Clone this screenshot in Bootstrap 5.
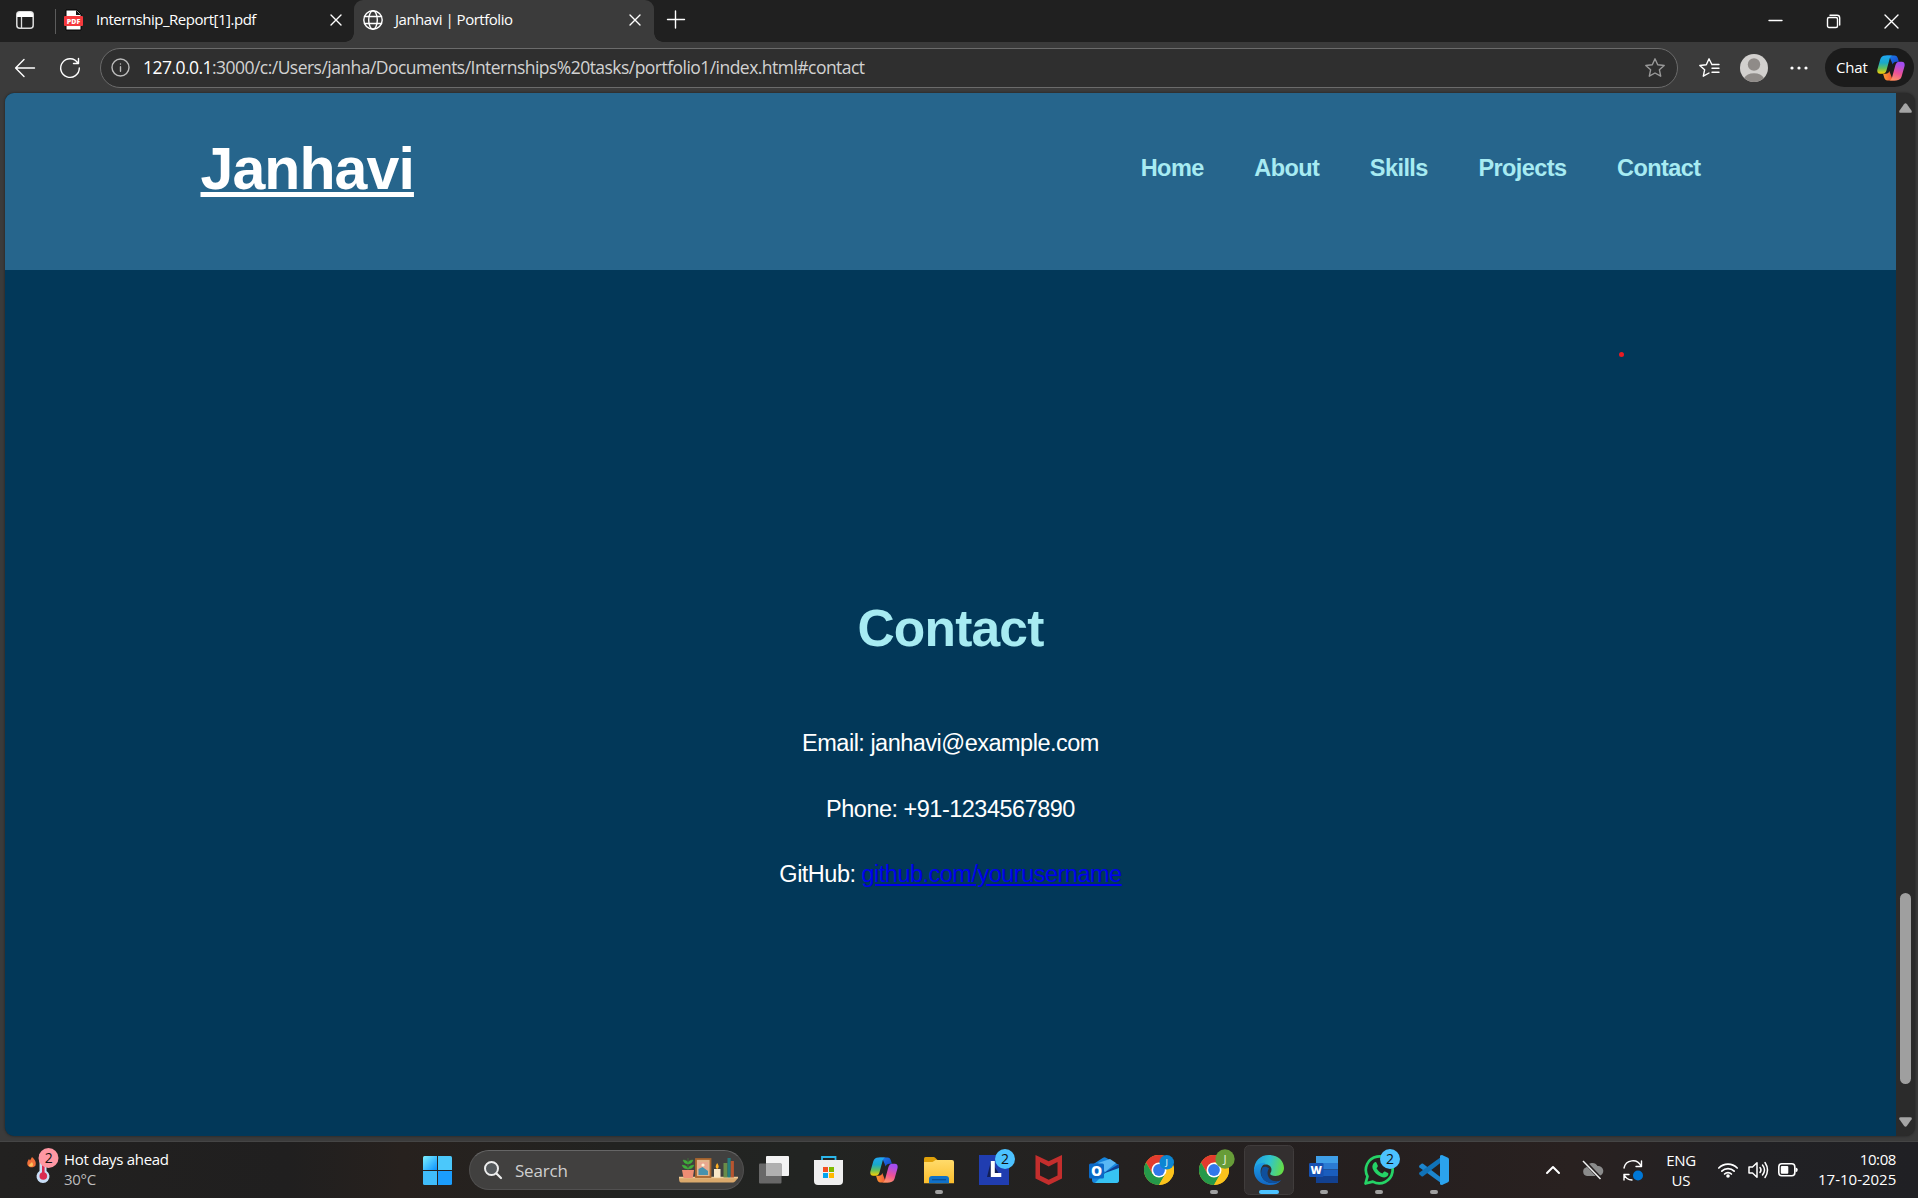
<!DOCTYPE html>
<html lang="en">
<head>
<meta charset="utf-8">
<meta name="viewport" content="width=device-width, initial-scale=1">
<title>Janhavi | Portfolio</title>
<link href="https://cdn.jsdelivr.net/npm/bootstrap@5.3.0/dist/css/bootstrap.min.css" rel="stylesheet">
<style>
  html, body { height: 1198px; overflow: hidden; }
  body { background: #3b3b3b; color: #fff; font-family: "Open Sans", "Noto Sans", sans-serif; }
  svg { display: block; flex: none; overflow: visible; }
  .ln { fill: none; stroke: #fff; stroke-width: 1.4; stroke-linecap: round; stroke-linejoin: round; }

  /* tab strip */
  .tabstrip { height: 42px; background: #202020; font-size: 15px; line-height: 32px; }
  .tabmenu { width: 55px; height: 42px; padding-left: 16px; padding-top: 11px; }
  .tab-idle { width: 298px; height: 42px; padding: 0 12px 0 8px; }
  .tab-sep { width: 1px; height: 25px; margin-top: 9px; background: #5c5c5c; }
  .tab-live { width: 300px; height: 42px; padding: 0 13px 0 9px; background: #3b3b3b; border-radius: 9px 9px 0 0; position: relative; }
  .tab-live::before, .tab-live::after { content: ""; position: absolute; bottom: 0; width: 9px; height: 9px; }
  .tab-live::before { left: -9px; background: radial-gradient(circle at 0 0, transparent 8.5px, #3b3b3b 9px); }
  .tab-live::after { right: -9px; background: radial-gradient(circle at 100% 0, transparent 8.5px, #3b3b3b 9px); }
  .tab-title { letter-spacing: -.48px; white-space: nowrap; padding-bottom: 2px; }
  .tab-row { height: 40px; }
  .winbtns { gap: 45px; padding-right: 20px; height: 42px; }

  /* address row */
  .toolbar { height: 51px; padding: 0 4px 0 15px; }
  .pill { width: 1578px; height: 40px; border: 1px solid #6b6b6b; border-radius: 20px; background: #2f2f2f; padding: 0 12px 0 10px; }
  .url { font-size: 17.5px; letter-spacing: -.535px; color: #d2d2d2; white-space: nowrap; margin-left: 13px; line-height: 36px; padding-bottom: 2px; }
  .url b { font-weight: 400; color: #fff; }
  .chatpill { width: 89px; height: 39px; border-radius: 20px; background: #1b1b1b; padding-left: 11px; font-size: 15px; letter-spacing: -.15px; }

  /* page */
  .viewport { height: 1043px; margin: 0 3px 0 5px; border-radius: 9px; overflow: hidden; background: #2b2b2b; box-shadow: 0 0 3px rgba(0,0,0,.45); }
  .site { width: 1891px; background: #023859; font-family: "Liberation Sans", Arial, sans-serif; font-size: 23.5px; letter-spacing: -.505px; }
  .site-head { height: 177px; background: #26658c; }
  .site-inner { width: 1500px; margin: 0 auto; padding-top: 43px; }
  .brand { font-size: 59px; line-height: 66px; letter-spacing: -.9px; font-weight: 700; color: #fff; text-decoration: underline; text-decoration-thickness: 5px; text-underline-offset: 3px; text-decoration-skip-ink: none; }
  .menu { gap: 50.6px; padding-top: 19px; }
  .menu a { color: #a7ebf2; font-weight: 700; line-height: 26px; letter-spacing: -.58px; text-decoration: none; }
  .contact { height: 866px; padding-top: 329px; position: relative; }
  .contact h2 { font-size: 51.5px; line-height: 58px; letter-spacing: -.8px; font-weight: 700; color: #a7ebf2; margin: 0 0 73px; }
  .contact p { line-height: 26px; margin: 0 0 39.5px; }
  .contact p a { color: #00e; text-decoration: underline; }
  .laser { position: absolute; left: 1614px; top: 82px; width: 5px; height: 5px; border-radius: 50%; background: #e81b23; }
  .scroll { width: 19px; padding: 10px 5px 9px 3px; }
  .thumb { width: 11px; height: 191px; border-radius: 6px; background: #9f9f9f; margin: 0 0 33px 1px; }

  /* taskbar */
  .taskbar { margin-top: 5px; height: 57px; border-top: 1px solid #454545; background: linear-gradient(90deg, #222120 0, #201f1f 15%, #27211e 21%, #222321 32%, #222422 42%, #242120 58%, #251f1f 72%, #292120 82%, #212124 91%, #202024 100%); }
  .weather { width: 410px; padding: 4px 0 0 26px; font-size: 15px; line-height: 20px; letter-spacing: -.3px; }
  .weather-text { padding-top: 3px; }
  .searchbox { width: 275px; height: 40px; border-radius: 20px; background: #41403f; border: 1px solid #515050; border-top-color: #666; margin: 8px 2px 0 4px; padding: 0 5px 0 14px; font-size: 17px; color: #cfcfcf; }
  .app { width: 55px; height: 50px; margin-top: 3px; }
  .tray { font-size: 15px; line-height: 20px; padding-right: 22px; }
  .tray > * { flex: none; }
  .g { font-family: "Open Sans", sans-serif; }
</style>
</head>
<body>
<svg width="0" height="0" class="position-absolute" aria-hidden="true">
  <defs>
    <linearGradient id="cA" x1="0" y1="0" x2="0" y2="1"><stop offset="0" stop-color="#22a7f2"/><stop offset=".4" stop-color="#19a9c9"/><stop offset=".7" stop-color="#65c05c"/><stop offset="1" stop-color="#ffd000"/></linearGradient>
    <linearGradient id="cB" x1="0" y1="0" x2="1" y2="1"><stop offset="0" stop-color="#1a86f2"/><stop offset="1" stop-color="#1b3fc4"/></linearGradient>
    <linearGradient id="cC" x1=".3" y1="0" x2="0" y2="1"><stop offset="0" stop-color="#a34df0"/><stop offset=".5" stop-color="#ee5296"/><stop offset="1" stop-color="#ffa15c"/></linearGradient>
    <linearGradient id="cD" x1="0" y1="0" x2="1" y2="0"><stop offset="0" stop-color="#ff9a2e"/><stop offset="1" stop-color="#e8403f"/></linearGradient>
    <linearGradient id="win" x1="0" y1="0" x2="1" y2="1"><stop offset="0" stop-color="#7df1ff"/><stop offset="1" stop-color="#0d93ff"/></linearGradient>
    <linearGradient id="fold" x1="0" y1="0" x2="0" y2="1"><stop offset="0" stop-color="#ffdb6b"/><stop offset="1" stop-color="#fbbd2c"/></linearGradient>
    <linearGradient id="eA" x1="0" y1=".3" x2="1" y2=".5"><stop offset="0" stop-color="#1e9de8"/><stop offset=".5" stop-color="#2fc4cf"/><stop offset="1" stop-color="#66dd44"/></linearGradient>
    <linearGradient id="eB" x1="0" y1="0" x2="0" y2="1"><stop offset="0" stop-color="#1c9ce6"/><stop offset="1" stop-color="#1267c4"/></linearGradient>
    <symbol id="copilot" viewBox="0 0 28 26">
      <path fill="url(#cB)" d="M9 .4h8.400c2 0 2.900 1.200 3.500 3.100l1 3.300h-2.600c-1.900 0-3 1-3.600 2.700L13 3z"/>
      <path fill="url(#cD)" d="M18.800 25.400h-8.300c-2 0-2.900-1.200-3.400-3.100l-1-3.500h2.700c1.900 0 3-1 3.500-2.700L15 23z"/>
      <path fill="url(#cA)" d="M8.500.4h7.200c-1.700 0-2.500 1.400-3 3.200L9.600 15c-.7 2.500-1.800 3.800-4 3.800H3.200C.9 18.800-.2 17 .4 14.400L3.300 4.200C4 1.700 5.700.4 8.500.4z"/>
      <path fill="url(#cC)" d="M19.300 25.400h-7.200c1.700 0 2.500-1.400 3-3.200l3.200-11.600c.7-2.500 1.800-3.800 4-3.800h2.500c2.300 0 3.300 1.800 2.700 4.400l-2.900 10.400c-.7 2.500-2.500 3.800-5.300 3.800z"/>
    </symbol>
    <symbol id="chrome" viewBox="0 0 30 30">
      <circle cx="15" cy="15" r="15" fill="#fcc31c"/>
      <path fill="#e33b2e" d="M2 7.500A15 15 0 0 1 28 7.500H15L8.500 18.700z"/>
      <path fill="#25994a" d="M2 7.500A15 15 0 0 0 15 30l6.500-11.200-13 0z"/>
      <path fill="#fcc31c" d="M28 7.500H15l6.500 11.300L15 30A15 15 0 0 0 28 7.500z"/>
      <circle cx="15" cy="15" r="7.500" fill="#fff"/><circle cx="15" cy="15" r="5.900" fill="#3178ea"/>
    </symbol>
  </defs>
</svg>

<header class="tabstrip d-flex">
  <div class="tabmenu">
    <svg width="18" height="18"><rect x=".8" y=".8" width="16.400" height="16.400" rx="3" fill="none" stroke="#ddd" stroke-width="1.500"/><path d="M1 4a3 3 0 0 1 3-3h10a3 3 0 0 1 3 3v2H1z" fill="#fff"/><path d="M5.500 6v11" stroke="#ddd" stroke-width="1.300"/></svg>
  </div>
  <div class="tab-sep"></div>
  <div class="tab-idle d-flex">
    <div class="tab-row d-flex align-items-center w-100">
      <svg width="19" height="20"><path d="M2 0h11l4 4v16H2z" fill="#fff" stroke="#000"/><path d="M12 0l5 5h-5z" fill="#111"/><rect y="6" width="19" height="10" rx="1" fill="#f5393d"/><text x="9.500" y="13.700" text-anchor="middle" font-size="7" font-weight="800" fill="#fff" class="g">PDF</text></svg>
      <span class="tab-title" style="margin-left:13px">Internship_Report[1].pdf</span>
      <svg class="ms-auto" width="12" height="12"><path class="ln" d="M1 1l10 10M11 1L1 11"/></svg>
    </div>
  </div>
  <div class="tab-live">
    <div class="tab-row d-flex align-items-center w-100">
      <svg width="20" height="20"><g class="ln"><circle cx="10" cy="10" r="9.200"/><ellipse cx="10" cy="10" rx="4.300" ry="9.200"/><path d="M1.500 6.500h17M1.500 13.500h17"/></g></svg>
      <span class="tab-title" style="margin-left:12px">Janhavi | Portfolio</span>
      <svg class="ms-auto" width="12" height="12"><path class="ln" d="M1 1l10 10M11 1L1 11"/></svg>
    </div>
  </div>
  <div class="d-flex align-items-center tab-row" style="padding-left:13px"><svg width="18" height="18"><path class="ln" d="M.5 8.500h17M8.500 0v17"/></svg></div>
  <div class="winbtns ms-auto d-flex align-items-center">
    <svg width="13" height="13"><path class="ln" stroke-linecap="butt" d="M0 5.500h13"/></svg>
    <svg width="13" height="13"><g class="ln"><rect x=".5" y="2.500" width="10" height="10" rx="1.500"/><path d="M3 .3h7a2.700 2.700 0 0 1 2.700 2.700v7"/></g></svg>
    <svg width="13" height="13"><path class="ln" d="M0 0l13 13M13 0L0 13"/></svg>
  </div>
</header>

<div class="toolbar d-flex align-items-center">
  <svg width="20" height="18"><path class="ln" d="M19.500 9H.8M9 .6L.6 9 9 17.400"/></svg>
  <svg width="20" height="20" style="margin-left:25px"><path class="ln" d="M17.800 5A9.300 9.300 0 1 0 19.300 10M18.500.5V5.500H13.500"/></svg>
  <div class="pill d-flex align-items-center" style="margin-left:20px">
    <svg width="19" height="19"><g class="ln" style="stroke:#bbb"><circle cx="9.500" cy="9.500" r="8.500"/><path d="M9.500 8.800v4.500M9.500 5.900v.1"/></g></svg>
    <span class="url"><b>127.0.0.1</b>:3000/c:/Users/janha/Documents/Internships%20tasks/portfolio1/index.html#contact</span>
    <svg class="ms-auto" width="20" height="19"><path class="ln" style="stroke:#999" d="M10 .8l2.700 5.900 6.500.8-4.800 4.300 1.300 6.400L10 15l-5.700 3.200 1.300-6.400L.8 7.500l6.500-.8z"/></svg>
  </div>
  <svg width="20" height="19" style="margin-left:21px"><path class="ln" d="M13 6.700L10 .8 7.300 6.700.8 7.500l4.800 4.300-1.300 6.400L10 15M13 6.500h7M13 10.300h7M13 14.200h7"/></svg>
  <svg width="28" height="28" style="margin-left:21px"><circle cx="14" cy="14" r="14" fill="#d2d0ce"/><circle cx="14" cy="10.500" r="6.200" fill="#8f8b88"/><path d="M4.200 24a10.500 7.500 0 0 1 19.600 0 14 14 0 0 1-19.600 0z" fill="#8f8b88"/></svg>
  <svg width="18" height="4" style="margin-left:22px"><g fill="#fff"><circle cx="2" cy="2" r="1.600"/><circle cx="9" cy="2" r="1.600"/><circle cx="16" cy="2" r="1.600"/></g></svg>
  <div class="chatpill d-flex align-items-center ms-auto"><span>Chat</span><svg width="28" height="26" style="margin-left:9px"><use href="#copilot"/></svg></div>
</div>

<div class="viewport d-flex">
  <main class="site">
    <nav class="site-head">
      <div class="site-inner d-flex justify-content-between align-items-start">
        <span class="brand">Janhavi</span>
        <div class="menu d-flex"><a href="#home">Home</a><a href="#about">About</a><a href="#skills">Skills</a><a href="#projects">Projects</a><a href="#contact">Contact</a></div>
      </div>
    </nav>
    <section id="contact" class="contact text-center">
      <h2>Contact</h2>
      <p>Email: janhavi@example.com</p>
      <p>Phone: +91-1234567890</p>
      <p>GitHub: <a href="#github">github.com/yourusername</a></p>
      <span class="laser"></span>
    </section>
  </main>
  <div class="scroll d-flex flex-column">
    <svg width="13" height="10" class="mb-auto"><path d="M5 1.200q1.500-2 3 0l4.600 6.500q.8 2-1.200 2H1.600q-2 0-1.200-2z" fill="#a5a5a5"/></svg>
    <div class="thumb"></div>
    <svg width="13" height="10"><path d="M5 8.800q1.500 2 3 0l4.600-6.500q.8-2-1.200-2H1.600q-2 0-1.200 2z" fill="#a5a5a5"/></svg>
  </div>
</div>

<footer class="taskbar d-flex">
  <div class="weather d-flex">
    <svg width="38" height="40"><path d="M6 11c3 3 4.500 5 3.500 8.500C8 22 3 22 1.500 19 .7 16 2 15 3 13l1 1.500z" fill="#f0703a"/><path d="M6 16q2 3 0 4.500-3 .5-3-1.500z" fill="#ffc05a"/><path d="M13.500 8h7v17a6.500 6.500 0 1 1-7 0z" fill="#c9dff7"/><circle cx="17.300" cy="30" r="3.800" fill="#d92b51"/><path d="M17.300 14v16" stroke="#d92b51" stroke-width="2.600"/><circle cx="22.500" cy="12" r="10" fill="#ff97a3"/><text x="22.500" y="17" text-anchor="middle" font-size="14" class="g" fill="#111">2</text></svg>
    <div class="weather-text"><div>Hot days ahead</div><div style="color:#bdbdbd">30°C</div></div>
  </div>
  <svg class="app" viewBox="0 0 55 50"><g fill="url(#win)"><path d="M13 12.500q0-1.500 1.500-1.500H27v14H13z"/><path d="M28 11h12.500q1.500 0 1.500 1.500V25H28z" fill="#4bc8fb"/><path d="M13 26h14v14H14.500Q13 40 13 38.500z" fill="#40bdfb"/><path d="M28 26h14v12.500q0 1.500-1.500 1.500H28z" fill="#1b9dfd"/></g></svg>
  <div class="searchbox d-flex align-items-center">
    <svg width="18" height="18"><circle cx="7.500" cy="7.500" r="6.500" fill="#55595c" stroke="#eee" stroke-width="2"/><path d="M12.500 12.500l4.500 4.500" stroke="#eee" stroke-width="2.200" stroke-linecap="round"/></svg>
    <span style="margin-left:13px;padding-top:1px;letter-spacing:-.2px">Search</span>
    <svg class="ms-auto" width="59" height="26">
      <path d="M0 21h59l-3 3.500q-1 1-2 1H2q-2 0-2-4.500z" fill="#dba96c"/><path d="M0 20.500h59" stroke="#f1cd98" stroke-width="1.500"/>
      <path d="M3 13h12l-1.200 8H4.500z" fill="#ee8d74"/><path d="M9 13V1M9 12q-5 0-6-4 5 0 6 4zM9 12q5 0 6-4-5 0-6 4zM9 7Q5 7 4 3q5 0 5 4zM9 7q4 0 5-4-5 0-5 4z" fill="#3fae3a" stroke="#3fae3a" stroke-width=".4"/>
      <rect x="17" y="2" width="14.500" height="18" fill="#e2b48b" stroke="#a9652e" stroke-width="1.800"/><path d="M19.500 5h9.500v8h-9.500z" fill="#e9a88f"/><circle cx="24" cy="8" r="1.600" fill="#fff1d5"/><path d="M19.500 12l4-2 5.500 4v4h-9.500z" fill="#4892ad"/>
      <rect x="35" y="12" width="6.500" height="8.500" fill="#f9e7c8"/><path d="M38.200 6q3 4 0 6-3-2 0-6z" fill="#ffae21"/>
      <rect x="44.500" y="6" width="4" height="14.500" fill="#6a8c49"/><rect x="48.500" y="1" width="3.200" height="19.500" fill="#237e80"/><rect x="51.700" y="4" width="3.200" height="16.500" fill="#b8552f"/>
    </svg>
  </div>
  <svg class="app" viewBox="0 0 55 50"><rect x="20" y="11" width="23" height="20" rx="1" fill="#f3f3f3"/><rect x="13" y="18.500" width="22.500" height="20" rx="1" fill="#686868"/><path d="M20 18.500h15.500V31H20z" fill="#b0b0b0"/></svg>
  <svg class="app" viewBox="0 0 55 50"><path d="M21 17v-5h13.500v5" fill="none" stroke="#2cb8ec" stroke-width="1.800"/><path d="M13 15h29v21q0 4-4 4H17q-4 0-4-4z" fill="#efefef"/><path d="M22 22h5v5h-5z" fill="#f25022"/><path d="M28 22h5v5h-5z" fill="#7fba00"/><path d="M22 28h5v5h-5z" fill="#00a4ef"/><path d="M28 28h5v5h-5z" fill="#ffb900"/></svg>
  <svg class="app" viewBox="0 0 55 50"><use href="#copilot" x="14" y="12" width="28" height="26"/></svg>
  <svg class="app" viewBox="0 0 55 50"><path d="M13 13.500q0-1.500 1.500-1.500h8q1 0 1.700.7l2.300 2.300v5H13z" fill="#dfa009"/><path d="M13 17h8.500l3-2H41q2 0 2 2v21.300H13z" fill="url(#fold)"/><path d="M18 38.300V34q0-3 3-3h14q3 0 3 3v4.300z" fill="#1071c8"/><path d="M21 34.700h14" stroke="#0b4f94" stroke-width="1.300"/><rect x="24" y="45" width="8" height="4" rx="2" fill="#a0a0a0"/></svg>
  <svg class="app" viewBox="0 0 55 50"><path d="M13 10h30v30H13z" fill="#203db0"/><path d="M25 16l-4 16h14z" fill="#121f55"/><path d="M24.800 16h4v12h6.500v4H24.800z" fill="#fff"/><circle cx="39" cy="14" r="10" fill="#4cc2ff"/><text x="39" y="19" text-anchor="middle" font-size="14" class="g" fill="#111">2</text></svg>
  <svg class="app" viewBox="0 0 55 50"><path d="M14.500 10l13.200 6.200L41 10v23.500L27.700 40l-13.200-6.500z" fill="#c42e2d"/><path d="M19 17l8.700 4.500L36.500 17v13.500l-8.800 4.300L19 30.500z" fill="#251f1f"/></svg>
  <svg class="app" viewBox="0 0 55 50"><path d="M16 20l11-7.300q1.500-1 3 0L43 20v15q0 3-3 3H19q-3 0-3-3z" fill="#1685dd"/><path d="M22 18l12-4 6 4-11 9z" fill="#59b8f5"/><path d="M28 28l15-9v4L26 35z" fill="#0e3f94"/><path d="M43 23v12q0 3-3 3H19l10-10z" fill="#37c3f3"/><rect x="13" y="18.500" width="15" height="15" rx="1.500" fill="#0a69c7"/><text x="20.500" y="31" text-anchor="middle" font-size="14" font-weight="800" class="g" fill="#fff">O</text></svg>
  <svg class="app" viewBox="0 0 55 50"><use href="#chrome" x="13" y="10" width="30" height="30"/><circle cx="35.700" cy="17.300" r="7.300" fill="#0c86d2"/><text x="35.700" y="20.500" text-anchor="middle" font-size="9" class="g" fill="#fff">J</text></svg>
  <svg class="app" viewBox="0 0 55 50"><use href="#chrome" x="13" y="10" width="30" height="30"/><circle cx="39" cy="14" r="9.700" fill="#679c38"/><text x="39" y="18.200" text-anchor="middle" font-size="11.500" class="g" fill="#e8f1df">J</text><rect x="24" y="45" width="8" height="4" rx="2" fill="#a0a0a0"/></svg>
  <svg class="app" viewBox="0 0 55 50"><rect x="3.500" y=".5" width="49" height="49" rx="5" fill="#332f2f" stroke="#403c3c"/><path d="M13 26C13 16 19 10 28 10c9 0 15 6 15 13 0 5-4 8-8.500 8-4 0-6-1.500-5-3 2.500-4 0-8.500-4.500-8.500C19 19.500 14 22 13 26z" fill="url(#eA)"/><path d="M13 25c1-5 6-8 12-7-5 2-7 9-4 14 3 6 11 8 19 3.500C37 39 32.500 40 28 40c-9 0-15.500-7-15-15z" fill="url(#eB)"/><path d="M21.500 22.500c-3 6-1 12 5 14.500 5 2 11 1 14-2-5 2.500-11 1-13-3-1.500-3-1.200-6 .5-8.500-2-2-4.500-2.500-6.500-1z" fill="#0f4f9c"/><rect x="18" y="45" width="20" height="4" rx="2" fill="#4cc2ff"/></svg>
  <svg class="app" viewBox="0 0 55 50"><path d="M20 11h22v7H20z" fill="#3f9fe8"/><path d="M20 18h22v6.500H20z" fill="#2b7bd3"/><path d="M20 24.500h22V31H20z" fill="#1a5dbe"/><path d="M20 31h22v7H20z" fill="#12408f"/><rect x="13" y="18" width="14.500" height="14" rx="1.200" fill="#1651b2"/><text x="20.200" y="29" text-anchor="middle" font-size="11" font-weight="800" class="g" fill="#fff">W</text><rect x="24" y="45" width="8" height="4" rx="2" fill="#a0a0a0"/></svg>
  <svg class="app" viewBox="0 0 55 50"><path d="M14.500 38.500l2-7.200A13.400 13.400 0 1 1 21.800 36.600z" fill="none" stroke="#25d366" stroke-width="2.700" stroke-linejoin="round"/><path d="M23.500 17.500c.8-.6 1.600-.5 2 .3l1.300 3c.2.700-.4 1.500-1.300 2.400 1.500 2.700 3.300 4.300 6 5.300 1.500-2 2-2.200 3-1.700l2.500 1.300c.8.500.3 2-.5 3-1.500 1.600-4 1.600-6.500.6-4-1.500-6.800-4.500-8.300-8-.9-2.500.2-5 1.800-6.200z" fill="#25d366"/><circle cx="39" cy="14" r="10" fill="#4cc2ff"/><text x="39" y="19" text-anchor="middle" font-size="14" class="g" fill="#111">2</text><rect x="24" y="45" width="8" height="4" rx="2" fill="#a0a0a0"/></svg>
  <svg class="app" viewBox="0 0 55 50"><path d="M13.500 20.500l2-1.800q.8-.5 1.600 0L37 34v5.500L13.500 22.500q-1-1 0-2z" fill="#1c86cf"/><path d="M13.500 29.500l2 1.800q.8.500 1.600 0L37 16v-5.500L13.500 27.500q-1 1 0 2z" fill="#1072b8"/><path d="M36 10l6 2.800q1 .5 1 1.700v21q0 1.200-1 1.700L36 40q-1.500 0-2-.8V10.800q.5-.8 2-.8z" fill="#2ba3ee"/><rect x="24" y="45" width="8" height="4" rx="2" fill="#a0a0a0"/></svg>

  <div class="tray d-flex align-items-start ms-auto">
    <svg width="14" height="8" style="margin:24px 22px 0 0"><path class="ln" style="stroke-width:2" d="M1 7l6-6 6 6"/></svg>
    <svg width="22" height="18" style="margin:19px 19px 0 0"><path d="M5 15a4.500 4.500 0 0 1-.5-8.800A6 6 0 0 1 15.500 5 5 5 0 0 1 17 15z" fill="#8b8b8b"/><path d="M2 0l17 18" stroke="#251f1f" stroke-width="3.500"/><path d="M1 0l17.500 18" stroke="#f2f2f2" stroke-width="1.500"/></svg>
    <svg width="21" height="21" style="margin:18px 22px 0 0"><path class="ln" d="M1 8a9 9 0 0 1 17-2M18.500 1v5.500H13M1 20v-5.500h5M1 14.500a9 9 0 0 0 8 5.500"/><circle cx="15" cy="15.500" r="5" fill="#0078d7"/></svg>
    <div class="text-center" style="width:30px;margin:8px 22px 0 0"><div style="letter-spacing:-.4px">ENG</div><div>US</div></div>
    <svg width="20" height="16" style="margin:20px 10px 0 0"><g class="ln" style="stroke-width:1.700"><path d="M.8 6a13 13 0 0 1 18.400 0M3.800 9.200a8.700 8.700 0 0 1 12.400 0M6.600 12a4.800 4.800 0 0 1 6.800 0"/></g><circle cx="10" cy="14" r="1.800" fill="#fff"/></svg>
    <svg width="20" height="18" style="margin:19px 10px 0 0"><g class="ln" style="stroke-width:1.500"><path d="M1 6h3.500L9 1.800v14.400L4.500 12H1zM12 6.500q2 2.500 0 5M14.500 4q4 5 0 10M17 1.500q5 7.500 0 15"/></g></svg>
    <svg width="20" height="14" style="margin:21px 20px 0 0"><rect x=".8" y=".8" width="16" height="12" rx="3" fill="none" stroke="#fff" stroke-width="1.600"/><rect x="2.800" y="3" width="7.500" height="7.800" rx="1" fill="#fff"/><path d="M17.500 4.500q2.300.3 2.300 2.300t-2.300 2.500z" fill="#fff"/></svg>
    <div class="text-end" style="width:78px;margin-top:7px"><div style="letter-spacing:-.4px">10:08</div><div class="text-nowrap">17-10-2025</div></div>
  </div>
</footer>
<script src="https://cdn.jsdelivr.net/npm/bootstrap@5.3.0/dist/js/bootstrap.bundle.min.js"></script>
</body>
</html>
